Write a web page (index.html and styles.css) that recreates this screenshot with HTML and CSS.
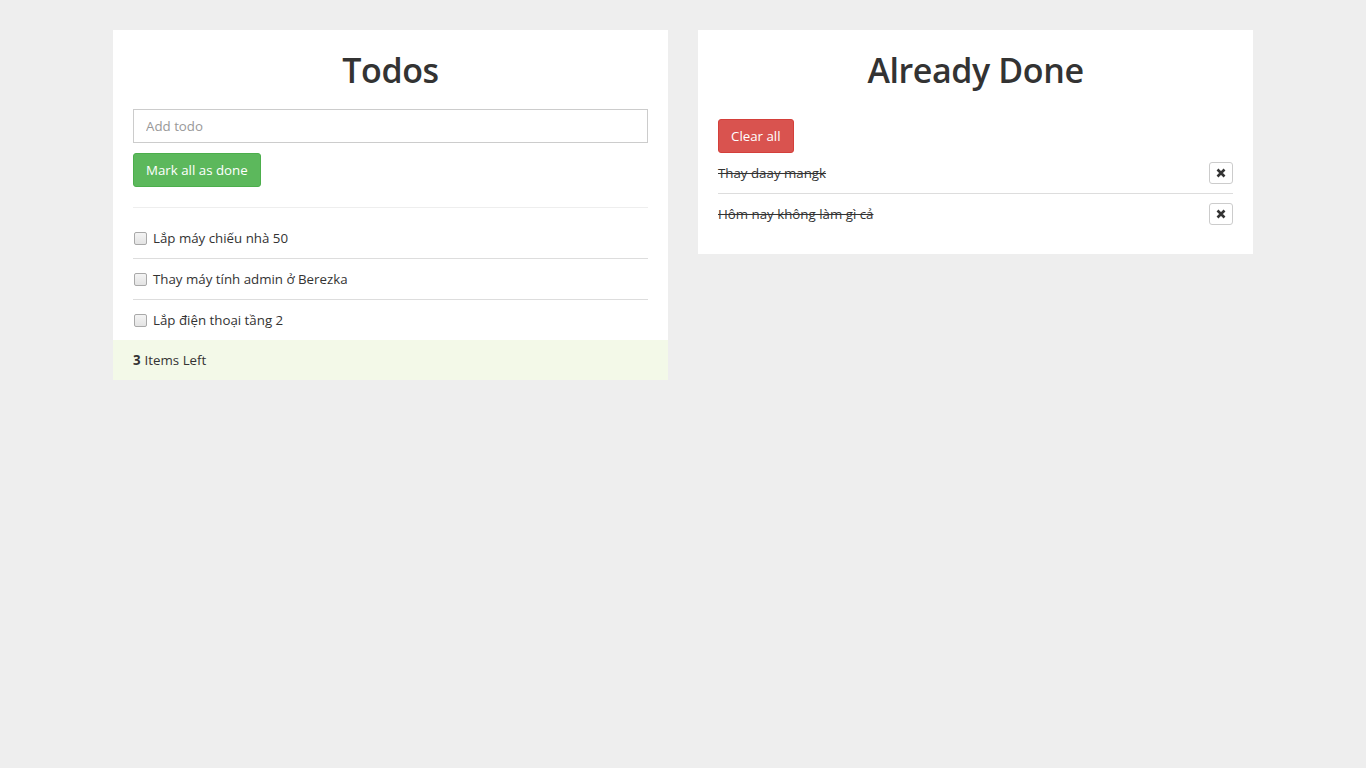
FILE: index.html
```html
<!DOCTYPE html>
<html lang="vi">
<head>
<meta charset="utf-8">
<title>Todos</title>
<link rel="stylesheet" href="styles.css">
</head>
<body>
<div class="container">
  <section class="panel">
    <h1 class="title">Todos</h1>
    <input class="todo-input" type="text" placeholder="Add todo">
    <div class="actions">
      <button class="btn btn-success">Mark all as done</button>
    </div>
    <hr class="divider">
    <ul class="todo-list">
      <li class="todo-item"><input type="checkbox" class="check"><span>Lắp máy chiếu nhà 50</span></li>
      <li class="todo-item"><input type="checkbox" class="check"><span>Thay máy tính admin ở Berezka</span></li>
      <li class="todo-item"><input type="checkbox" class="check"><span>Lắp điện thoại tầng 2</span></li>
    </ul>
    <div class="footer"><strong>3</strong> Items Left</div>
  </section>
  <section class="panel panel-done">
    <h1 class="title">Already Done</h1>
    <div class="actions-done">
      <button class="btn btn-danger">Clear all</button>
    </div>
    <ul class="done-list">
      <li class="done-item"><span class="done-text">Thay daay mangk</span><button class="btn-remove" aria-label="remove"><svg viewBox="0 0 10 10" width="10" height="10"><path d="M1.5 1.5 L8.5 8.5 M8.5 1.5 L1.5 8.5" stroke="#333" stroke-width="2.6" stroke-linecap="butt"/></svg></button></li>
      <li class="done-item"><span class="done-text">Hôm nay không làm gì cả</span><button class="btn-remove" aria-label="remove"><svg viewBox="0 0 10 10" width="10" height="10"><path d="M1.5 1.5 L8.5 8.5 M8.5 1.5 L1.5 8.5" stroke="#333" stroke-width="2.6" stroke-linecap="butt"/></svg></button></li>
    </ul>
  </section>
</div>
</body>
</html>
```
FILE: styles.css
```css
* { box-sizing: border-box; }
html, body { margin: 0; padding: 0; }
body {
  background: #eeeeee;
  font-family: "Open Sans", "Noto Sans", "Liberation Sans", sans-serif;
  font-size: 13.3px;
  color: #333;
  line-height: 1.42857;
}
.container {
  width: 1140px;
  margin: 30px auto 0;
  display: flex;
  gap: 30px;
  align-items: flex-start;
}
.panel {
  flex: 1 1 0;
  background: #fff;
  padding: 0 20px;
}
.panel-done { padding-bottom: 20px; }
.title {
  margin: 21px 0 18px;
  font-size: 34px;
  font-weight: 600;
  line-height: 39.6px;
  text-align: center;
  color: #333;
  letter-spacing: -0.4px;
}
.todo-input {
  display: block;
  width: 100%;
  height: 34px;
  padding: 6px 12px;
  border: 1px solid #ccc;
  border-radius: 0;
  font-family: inherit;
  font-size: 13.3px;
  color: #555;
  outline: none;
}
.todo-input::placeholder { color: #999; }
.actions { margin-top: 10px; }
.btn {
  display: inline-block;
  height: 34px;
  padding: 0 12px;
  border: 1px solid transparent;
  border-radius: 3px;
  font-family: inherit;
  font-size: 13.3px;
  color: #fff;
  cursor: pointer;
}
.btn-success { background: #5cb85c; border-color: #4cae4c; }
.btn-danger { background: #d9534f; border-color: #d43f3a; }
.divider {
  margin: 20px 0 10px;
  border: 0;
  border-top: 1px solid #eee;
}
.todo-list, .done-list {
  list-style: none;
  margin: 0;
  padding: 0;
}
.todo-item {
  display: flex;
  align-items: center;
  height: 41px;
  padding-top: 1px;
  border-top: 1px solid #ddd;
}
.todo-item:first-child { border-top: 0; height: 40px; }
.check {
  appearance: none;
  -webkit-appearance: none;
  width: 13px;
  height: 13px;
  margin: 0 6px 0 1px;
  border: 1px solid #a9a9a9;
  border-radius: 2px;
  background: linear-gradient(#f4f4f4, #e3e3e3);
}
.footer {
  margin: 0 -20px;
  height: 40px;
  padding: 1px 20px 0;
  display: flex;
  align-items: center;
  background: #f3f9e8;
  gap: 4px;
}
.footer strong { font-weight: 700; }
.actions-done { margin-top: 28px; display: flex; }
.done-item {
  display: flex;
  align-items: center;
  justify-content: space-between;
  height: 41px;
  padding-top: 1px;
  border-top: 1px solid #ddd;
}
.done-item:first-child { border-top: 0; height: 40px; }
.done-text { text-decoration: line-through; }
.btn-remove {
  width: 24px;
  height: 22px;
  padding: 0;
  border: 1px solid #ccc;
  border-radius: 3px;
  background: #fff;
  display: flex;
  align-items: center;
  justify-content: center;
  cursor: pointer;
}
```
